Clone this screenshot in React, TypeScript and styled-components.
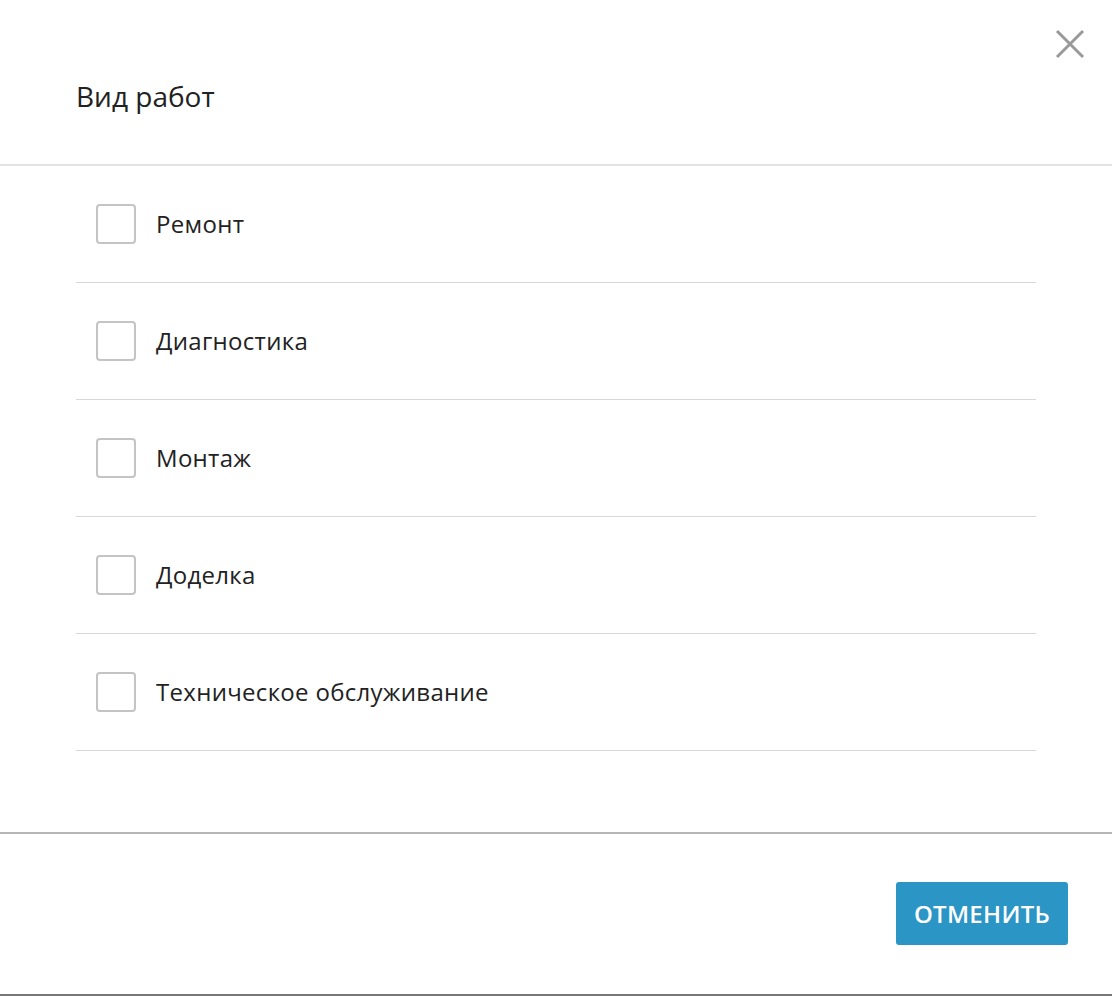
import React from "react";
import styled, { createGlobalStyle } from "styled-components";

const Global = createGlobalStyle`
  html, body { margin: 0; padding: 0; background: #fff; }
  body { font-family: "Open Sans", "Noto Sans", sans-serif; color: #222; }
  * { box-sizing: border-box; }
`;

const Modal = styled.div`
  width: 1112px;
  height: 996px;
  display: flex;
  flex-direction: column;
  background: #fff;
`;

const Header = styled.div`
  position: relative;
  height: 166px;
  padding: 78px 76px 0;
  border-bottom: 2px solid #e2e2e2;
`;

const Title = styled.h2`
  margin: 0;
  font-size: 28px;
  line-height: 36px;
  font-weight: 400;
  color: #222;
`;

const Close = styled.button`
  position: absolute;
  top: 28px;
  right: 26px;
  width: 32px;
  height: 32px;
  padding: 0;
  border: none;
  background: none;
  cursor: pointer;
  display: flex;
  align-items: center;
  justify-content: center;
`;

const List = styled.div`
  padding: 0 76px;
  height: 666px;
`;

const Row = styled.label`
  display: flex;
  align-items: center;
  height: 117px;
  border-bottom: 1px solid #d8d8d8;
  padding-left: 20px;
  cursor: pointer;
`;

const Box = styled.span`
  width: 40px;
  height: 40px;
  border: 2px solid #c4c4c4;
  border-radius: 4px;
  flex: none;
`;

const Label = styled.span`
  margin-left: 20px;
  font-size: 24px;
  line-height: 32px;
  letter-spacing: 0.3px;
  color: #222;
`;

const Footer = styled.div`
  flex: 1;
  display: flex;
  justify-content: flex-end;
  align-items: flex-start;
  padding: 48px 44px 0;
  border-top: 2px solid #b5b5b5;
  border-bottom: 2px solid #777;
`;

const Button = styled.button`
  width: 172px;
  height: 63px;
  padding: 0;
  border: none;
  border-radius: 3px;
  background: #2b95c6;
  color: #fff;
  font-family: "Open Sans", sans-serif;
  font-size: 24px;
  font-weight: 600;
  letter-spacing: 0.3px;
  text-transform: uppercase;
  cursor: pointer;
`;

const items = ["Ремонт", "Диагностика", "Монтаж", "Доделка", "Техническое обслуживание"];

export default function App() {
  return (
    <>
      <Global />
      <Modal>
        <Header>
          <Title>Вид работ</Title>
          <Close aria-label="close">
            <svg width="30" height="30" viewBox="0 0 30 30">
              <path d="M2 2 L28 28 M28 2 L2 28" stroke="#999" strokeWidth="3" fill="none" />
            </svg>
          </Close>
        </Header>
        <List>
          {items.map((t) => (
            <Row key={t}>
              <Box />
              <Label>{t}</Label>
            </Row>
          ))}
        </List>
        <Footer>
          <Button>Отменить</Button>
        </Footer>
      </Modal>
    </>
  );
}
